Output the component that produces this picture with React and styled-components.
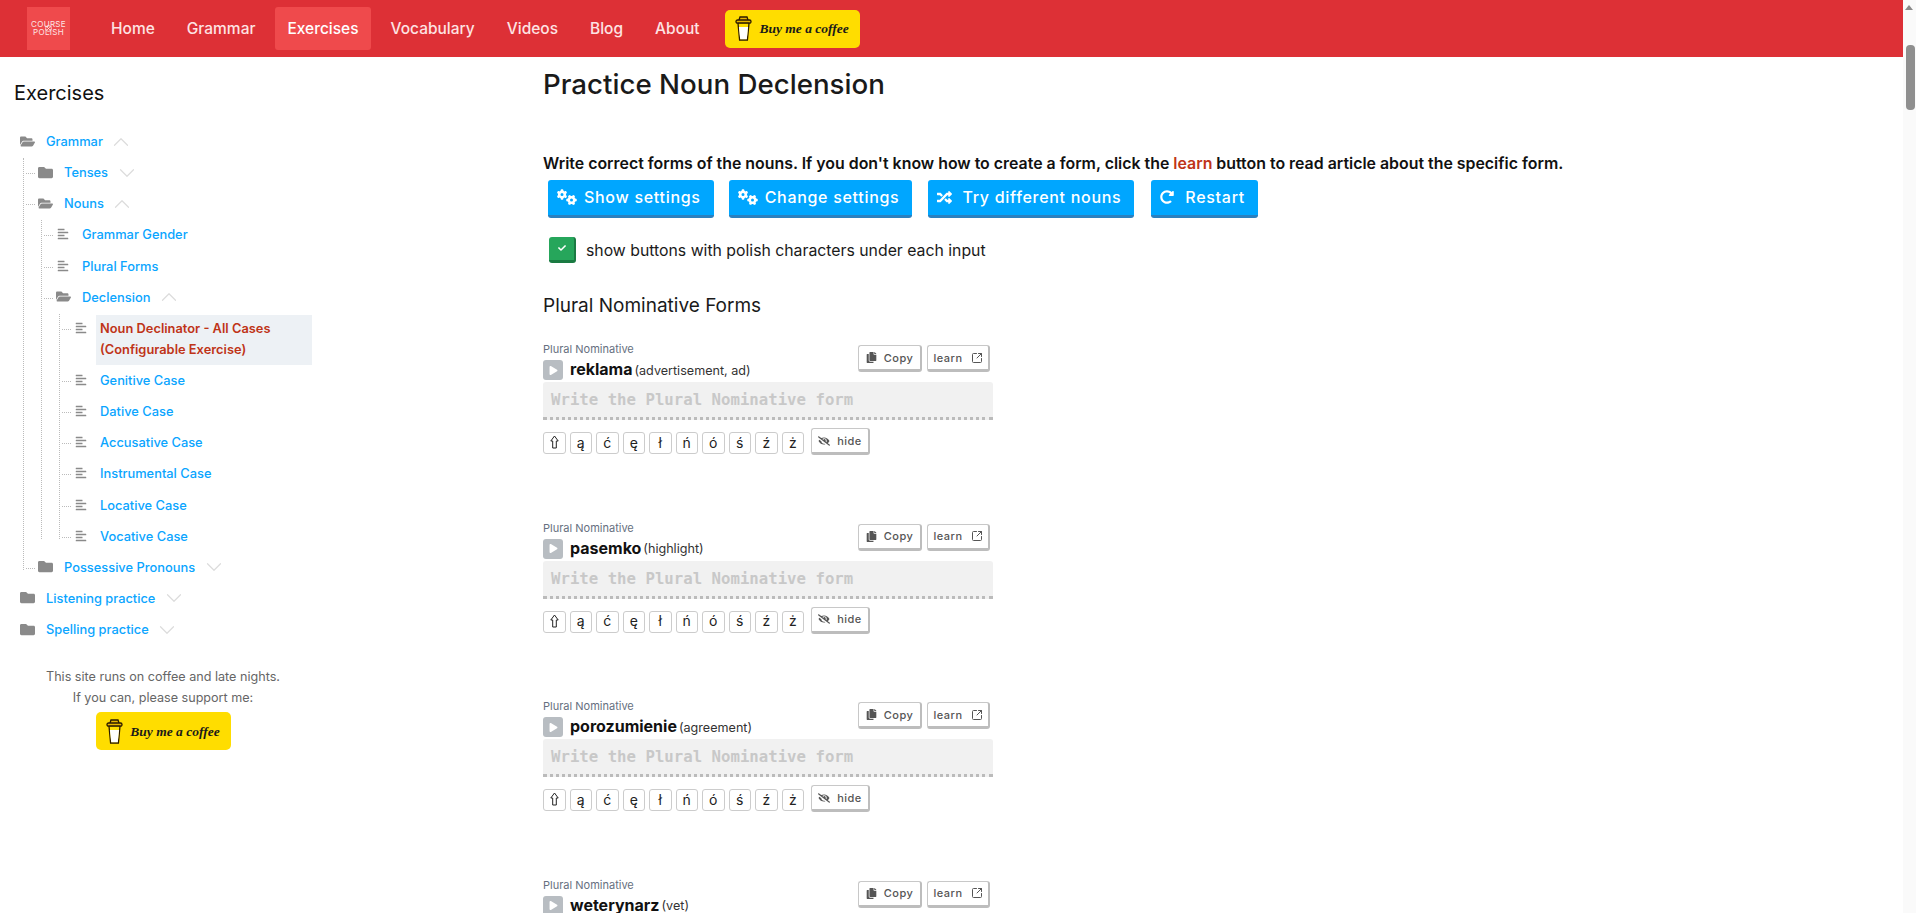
import React from "react";
import styled, { createGlobalStyle } from "styled-components";
import { FaRandom, FaRedoAlt, FaFolder, FaFolderOpen, FaAlignLeft, FaCheck, FaPlay, FaEyeSlash, FaCopy } from "react-icons/fa";
import { FaGears } from "react-icons/fa6";
import { ChevronUp, ChevronDown, SquareArrowOutUpRight } from "lucide-react";

const Global = createGlobalStyle`
  html, body { margin: 0; padding: 0; height: 100%; overflow: hidden; background: #fff; }
  body { font-family: Inter, "Noto Sans", sans-serif; color: #1a1a1a; }
  * { box-sizing: border-box; }
`;

const Page = styled.div`width: 1903px; height: 913px; overflow: hidden;`;
const Nav = styled.nav`
  height: 57px; background: #dd3036; display: flex; align-items: center; padding-left: 27px; gap: 8px;
`;
const Logo = styled.div`
  width: 43px; height: 43px; background: #ef4a4c; color: #fde5e5; margin-right: 21px;
  display: flex; flex-direction: column; align-items: center; justify-content: center;
  font-size: 8px; line-height: 9px; font-weight: 400; letter-spacing: 0.3px;
  svg { margin: -4px 0; }
`;
const NavLink = styled.a`
  height: 43px; padding: 0 12px; display: flex; align-items: center; border-radius: 3px;
  font-size: 15.5px; font-weight: 500; color: ${p => p.$active ? "#fff" : "#fde3e3"};
  background: ${p => p.$active ? "#ef4a4c" : "transparent"};
`;
const CoffeeButton = styled.a`
  width: 135px; height: 38px; background: #ffdd00; border-radius: 5px; flex: none;
  display: flex; align-items: center; justify-content: center; gap: 7px; margin-left: ${p => p.$nav ? "5px" : "0"};
`;
const CoffeeText = styled.span`
  font-family: "Liberation Serif", serif; font-style: italic; font-weight: 700; font-size: 13.5px; color: #1a1a1a; white-space: nowrap;
`;

const Body = styled.div`display: flex; align-items: flex-start;`;
const Sidebar = styled.aside`width: 543px; flex: none; padding: 0 0 0 14px;`;
const SideTitle = styled.h2`margin: 22px 0 0; font-size: 20px; line-height: 28px; font-weight: 400; color: #111;`;
const Tree = styled.ul`list-style: none; margin: 19px 0 0; padding: 0 0 0 4px; width: 298px;`;
const Branch = styled.ul`
  list-style: none; margin: 0 0 0 18px; padding: 0; position: relative;
  &::before { content: ""; position: absolute; left: -13px; top: 1px; bottom: 13px; border-left: 1px dotted #bbb; }
`;
const Node = styled.li`
  position: relative;
  &::before {
    content: ${p => p.$level > 0 ? '""' : "none"}; position: absolute; left: -10px; width: 9px; top: 16px; border-top: 1px dotted #bbb;
  }
`;
const Row = styled.div`
  display: flex; align-items: flex-start; padding: 2px 0 0;
`;
const IconSlot = styled.span`
  width: 18px; height: 29px; flex: none; display: flex; align-items: center; justify-content: center; color: #8a8a8a; font-size: ${p => p.$leaf ? "12px" : "15px"};
  padding-bottom: 3px;
`;
const Label = styled.a`
  margin-left: 5.5px; padding: 3px 4.5px 5.15px; font-size: 12.85px; line-height: 21px;
  color: ${p => p.$selected ? "#bf3418" : "#0aa5ff"};
  font-weight: ${p => p.$selected ? 600 : 500};
  background: ${p => p.$selected ? "#edf1f5" : "transparent"};
  flex: ${p => p.$selected ? 1 : "none"};
`;
const Chevron = styled.span`
  color: #dcdcdc; display: flex; align-items: center; height: 29px; margin-left: 1px; padding-bottom: 2px;
`;
const SupportBox = styled.div`
  width: 298px; margin: 21px 0 0; display: flex; flex-direction: column; align-items: center;
  font-size: 12.6px; line-height: 21px; color: #666;
`;
const SupportLine = styled.div``;
const SupportBtnWrap = styled.div`margin-top: 4px;`;

const Main = styled.main`flex: 1; min-width: 0;`;
const Title = styled.h1`margin: 9px 0 0; font-size: 27.7px; line-height: 36px; font-weight: 500; color: #1a1a1a;`;
const Intro = styled.p`margin: 51px 0 0; font-size: 15.9px; line-height: 22px; font-weight: 600; color: #111; white-space: nowrap;`;
const LearnWord = styled.span`color: #bf3418;`;
const ButtonRow = styled.div`display: flex; margin: 5px 0 0 5px;`;
const BlueButton = styled.button`
  height: 38px; border: 0; border-bottom: 3px solid #2b80bf; border-radius: 3px; background: #00a6ff; color: #fff;
  font: 500 16px Inter, sans-serif; letter-spacing: 0.7px; display: flex; align-items: center; gap: ${p => p.$icon}px;
  padding: 0 ${p => p.$right}px 1px 9px; margin-right: ${p => p.$gap}px; white-space: nowrap;
  svg { flex: none; }
`;
const CheckRow = styled.div`display: flex; align-items: center; margin: 19px 0 0 6px; gap: 10px; font-size: 15.8px; color: #1a1a1a;`;
const CheckBox = styled.span`
  width: 27px; height: 26px; background: #26a65b; border-bottom: 3px solid #1a7a42; border-right: 2px solid #1a7a42; border-radius: 3px;
  display: flex; align-items: center; justify-content: center; color: #fff; font-size: 8px; padding-bottom: 2px;
`;
const Section = styled.h3`margin: 30px 0 0; font-size: 19px; line-height: 26px; font-weight: 400; color: #1a1a1a;`;
const CardList = styled.div`margin-top: 21px; display: flex; flex-direction: column; gap: 0;`;
const Card = styled.section`width: 450px; height: 178.5px; flex: none;`;
const CardHead = styled.div`display: flex; justify-content: space-between; align-items: flex-start; height: 42px;`;
const CardInfo = styled.div`display: flex; flex-direction: column;`;
const Kind = styled.div`font-size: 11px; line-height: 14px; color: #667080; margin-top: 2px;`;
const WordLine = styled.div`display: flex; align-items: center; height: 20px; margin-top: 4px;`;
const Play = styled.span`
  width: 20px; height: 20px; background: #b8bdc2; border-radius: 3px; display: flex; align-items: center; justify-content: center;
  color: #fff; font-size: 9px; margin-right: 7px;
`;
const Word = styled.strong`font-size: 16px; font-weight: 700; color: #111; margin-right: 2px; position: relative; top: -1px;`;
const Gloss = styled.span`font-size: 12.6px; color: #333;`;
const HeadButtons = styled.div`display: flex; gap: 5px; margin: 5px 3px 0 0;`;
const SmallButton = styled.button`
  height: 27px; width: ${p => p.$w}px; border: 1px solid #c8c8c8; border-bottom: 3px solid #bdbdbd; border-right: 2px solid #bdbdbd; border-radius: 3px; background: #fff;
  color: #555; font: 500 11px Inter, sans-serif; letter-spacing: 0.5px; display: flex; align-items: center; justify-content: center; gap: ${p => p.$g || 7}px; padding: 0;
`;
const InputBox = styled.div`
  height: 38px; background: #f1f1f1; border-bottom: 3px dotted #bbb; border-radius: 3px 3px 0 0; padding: 0 8px;
  display: flex; align-items: center; font: 700 15.7px "DejaVu Sans Mono", monospace; color: #c8c8c8; white-space: nowrap;
`;
const CharRow = styled.div`display: flex; align-items: flex-end; margin-top: 7px; height: 27px;`;
const CharKey = styled.button`
  width: 22.5px; height: 22px; margin-right: 4px; border: 1px solid #ccc; border-radius: 3px; background: #fff; color: #222; padding: 0 0 2px;
  font: 400 14px Inter, "DejaVu Sans", sans-serif; display: flex; align-items: center; justify-content: center; flex: none;
`;
const HideWrap = styled.div`margin: 0 0 -1px 3px;`;

const ScrollTrack = styled.div`position: fixed; top: 0; right: 0; bottom: 0; width: 13px; background: #fafafa;`;
const ScrollArrow = styled.div`
  position: absolute; top: 5px; left: 2px; width: 0; height: 0; border-left: 4px solid transparent; border-right: 4px solid transparent; border-bottom: 5px solid #8a8a8a;
`;
const ScrollThumb = styled.div`position: absolute; top: 45px; left: 3px; width: 9px; height: 65px; background: #8f8f8f; border-radius: 4px;`;

const Cup = () => (
  <svg width="17" height="25" viewBox="0 0 17 25" fill="none" stroke="#2a1a00" strokeWidth="1.3" aria-hidden="true">
    <path d="M4 4 L5 1 H12 L13 4" fill="#e8b400" />
    <rect x="1" y="4" width="15" height="3.2" rx="1.5" fill="#e8b400" />
    <path d="M3 7.2 L4.6 24 H12.4 L14 7.2 Z" fill="#ffdd00" />
    <path d="M3.9 11 L5.2 23.3 H11.8 L13.1 11 Z" fill="#fff" stroke="none" />
  </svg>
);

const LogoMark = () => (
  <svg width="7" height="7" viewBox="0 0 8 8" fill="none" stroke="#fde5e5" strokeWidth="1" aria-hidden="true">
    <circle cx="4" cy="4" r="3.3" /><path d="M2.5 2.5 L5.5 5.5 M5.5 2.5 L2.5 5.5" />
  </svg>
);

const ShiftArrow = () => (
  <svg width="9" height="14" viewBox="0 0 9 14" fill="none" stroke="#222" strokeWidth="1" aria-hidden="true">
    <path d="M4.5 1 L8.2 6 H6.3 V13 H2.7 V6 H0.8 Z" />
  </svg>
);

const Coffee = ({ nav }) => (
  <CoffeeButton $nav={nav}><Cup /><CoffeeText>Buy me a coffee</CoffeeText></CoffeeButton>
);

const tree = [
  { t: "Grammar", open: true, kids: [
    { t: "Tenses", folder: true },
    { t: "Nouns", open: true, kids: [
      { t: "Grammar Gender" },
      { t: "Plural Forms" },
      { t: "Declension", open: true, kids: [
        { t: "Noun Declinator - All Cases (Configurable Exercise)", selected: true },
        { t: "Genitive Case" }, { t: "Dative Case" }, { t: "Accusative Case" },
        { t: "Instrumental Case" }, { t: "Locative Case" }, { t: "Vocative Case" },
      ] },
    ] },
    { t: "Possessive Pronouns", folder: true },
  ] },
  { t: "Listening practice", folder: true },
  { t: "Spelling practice", folder: true },
];

const TreeNode = ({ node, level }) => {
  const isFolder = node.folder || node.open;
  return (
    <Node $level={level}>
      <Row>
        <IconSlot $leaf={!isFolder}>
          {node.open ? <FaFolderOpen /> : node.folder ? <FaFolder /> : <FaAlignLeft />}
        </IconSlot>
        <Label $selected={node.selected}>{node.t}</Label>
        {isFolder && <Chevron>{node.open ? <ChevronUp size={26} strokeWidth={1.1} /> : <ChevronDown size={26} strokeWidth={1.1} />}</Chevron>}
      </Row>
      {node.kids && <Branch>{node.kids.map(k => <TreeNode key={k.t} node={k} level={level + 1} />)}</Branch>}
    </Node>
  );
};

const chars = ["ą", "ć", "ę", "ł", "ń", "ó", "ś", "ź", "ż"];

const WordCard = ({ word, gloss }) => (
  <Card>
    <CardHead>
      <CardInfo>
        <Kind>Plural Nominative</Kind>
        <WordLine>
          <Play><FaPlay /></Play>
          <Word>{word}</Word>
          <Gloss>({gloss})</Gloss>
        </WordLine>
      </CardInfo>
      <HeadButtons>
        <SmallButton $w={64}><FaCopy size={11} />Copy</SmallButton>
        <SmallButton $w={63} $g={8}>learn<SquareArrowOutUpRight size={12} /></SmallButton>
      </HeadButtons>
    </CardHead>
    <InputBox>Write the Plural Nominative form</InputBox>
    <CharRow>
      <CharKey><ShiftArrow /></CharKey>
      {chars.map(c => <CharKey key={c}>{c}</CharKey>)}
      <HideWrap><SmallButton $w={59}><FaEyeSlash size={12} />hide</SmallButton></HideWrap>
    </CharRow>
  </Card>
);

export default function App() {
  return (
    <>
      <Global />
      <Page>
        <Nav>
          <Logo><span>COURSE</span><LogoMark /><span>POLISH</span></Logo>
          {["Home", "Grammar", "Exercises", "Vocabulary", "Videos", "Blog", "About"].map(n => (
            <NavLink key={n} $active={n === "Exercises"}>{n}</NavLink>
          ))}
          <Coffee nav />
        </Nav>
        <Body>
          <Sidebar>
            <SideTitle>Exercises</SideTitle>
            <Tree>{tree.map(n => <TreeNode key={n.t} node={n} level={0} />)}</Tree>
            <SupportBox>
              <SupportLine>This site runs on coffee and late nights.</SupportLine>
              <SupportLine>If you can, please support me:</SupportLine>
              <SupportBtnWrap><Coffee /></SupportBtnWrap>
            </SupportBox>
          </Sidebar>
          <Main>
            <Title>Practice Noun Declension</Title>
            <Intro>Write correct forms of the nouns. If you don't know how to create a form, click the <LearnWord>learn</LearnWord> button to read article about the specific form.</Intro>
            <ButtonRow>
              <BlueButton $icon={7} $right={13} $gap={15}><FaGears size={20} />Show settings</BlueButton>
              <BlueButton $icon={7} $right={13} $gap={16}><FaGears size={20} />Change settings</BlueButton>
              <BlueButton $icon={10} $right={13} $gap={17}><FaRandom size={15} />Try different nouns</BlueButton>
              <BlueButton $icon={11} $right={13} $gap={0}><FaRedoAlt size={14} />Restart</BlueButton>
            </ButtonRow>
            <CheckRow><CheckBox><FaCheck /></CheckBox>show buttons with polish characters under each input</CheckRow>
            <Section>Plural Nominative Forms</Section>
            <CardList>
              <WordCard word="reklama" gloss="advertisement, ad" />
              <WordCard word="pasemko" gloss="highlight" />
              <WordCard word="porozumienie" gloss="agreement" />
              <WordCard word="weterynarz" gloss="vet" />
            </CardList>
          </Main>
        </Body>
      </Page>
      <ScrollTrack><ScrollArrow /><ScrollThumb /></ScrollTrack>
    </>
  );
}
